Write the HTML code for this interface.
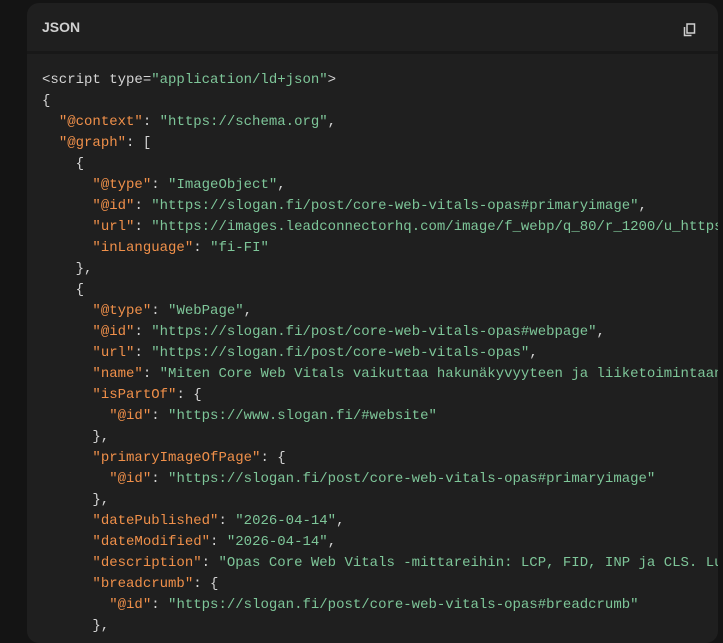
<!DOCTYPE html>
<html><head><meta charset="utf-8"><style>
html,body{margin:0;padding:0;background:#141414;width:723px;height:633px;overflow:hidden}
.card{position:absolute;left:27px;top:3px;width:691px;height:640px;background:#1f1f1f;border-radius:12px;overflow:hidden}
.hd{height:48px;border-bottom:3px solid #181818;position:relative}
.hd span{position:absolute;left:15px;top:16px;font:600 14px "Liberation Sans",sans-serif;color:#d0d0d0}
.ic{position:absolute;left:656px;top:20px}
pre{margin:0;padding:16px 0 0 15px;font:14px/21px "Liberation Mono",monospace;letter-spacing:0;color:#d4d4d4;white-space:pre}
.k{color:#f0904a}.s{color:#7ec699}
</style></head><body>
<div class="card">
<div class="hd"><span>JSON</span>
<svg class="ic" width="13" height="14" viewBox="0 0 13 14"><rect x="4" y="1" width="7.5" height="9" fill="none" stroke="#cfcfcf" stroke-width="1.5"/><path d="M1.5 4v8.5h7" fill="none" stroke="#cfcfcf" stroke-width="1.5"/></svg></div>
<pre>&lt;script type=<span class="s">"application/ld+json"</span>&gt;
{
  <span class="k">"@context"</span>: <span class="s">"https://schema.org"</span>,
  <span class="k">"@graph"</span>: [
    {
      <span class="k">"@type"</span>: <span class="s">"ImageObject"</span>,
      <span class="k">"@id"</span>: <span class="s">"https://slogan.fi/post/core-web-vitals-opas#primaryimage"</span>,
      <span class="k">"url"</span>: <span class="s">"https://images.leadconnectorhq.com/image/f_webp/q_80/r_1200/u_https://"</span>,
      <span class="k">"inLanguage"</span>: <span class="s">"fi-FI"</span>
    },
    {
      <span class="k">"@type"</span>: <span class="s">"WebPage"</span>,
      <span class="k">"@id"</span>: <span class="s">"https://slogan.fi/post/core-web-vitals-opas#webpage"</span>,
      <span class="k">"url"</span>: <span class="s">"https://slogan.fi/post/core-web-vitals-opas"</span>,
      <span class="k">"name"</span>: <span class="s">"Miten Core Web Vitals vaikuttaa hakunäkyvyyteen ja liiketoimintaan"</span>,
      <span class="k">"isPartOf"</span>: {
        <span class="k">"@id"</span>: <span class="s">"https://www.slogan.fi/#website"</span>
      },
      <span class="k">"primaryImageOfPage"</span>: {
        <span class="k">"@id"</span>: <span class="s">"https://slogan.fi/post/core-web-vitals-opas#primaryimage"</span>
      },
      <span class="k">"datePublished"</span>: <span class="s">"2026-04-14"</span>,
      <span class="k">"dateModified"</span>: <span class="s">"2026-04-14"</span>,
      <span class="k">"description"</span>: <span class="s">"Opas Core Web Vitals -mittareihin: LCP, FID, INP ja CLS. Lue"</span>,
      <span class="k">"breadcrumb"</span>: {
        <span class="k">"@id"</span>: <span class="s">"https://slogan.fi/post/core-web-vitals-opas#breadcrumb"</span>
      },
</pre>
</div>
</body></html>
